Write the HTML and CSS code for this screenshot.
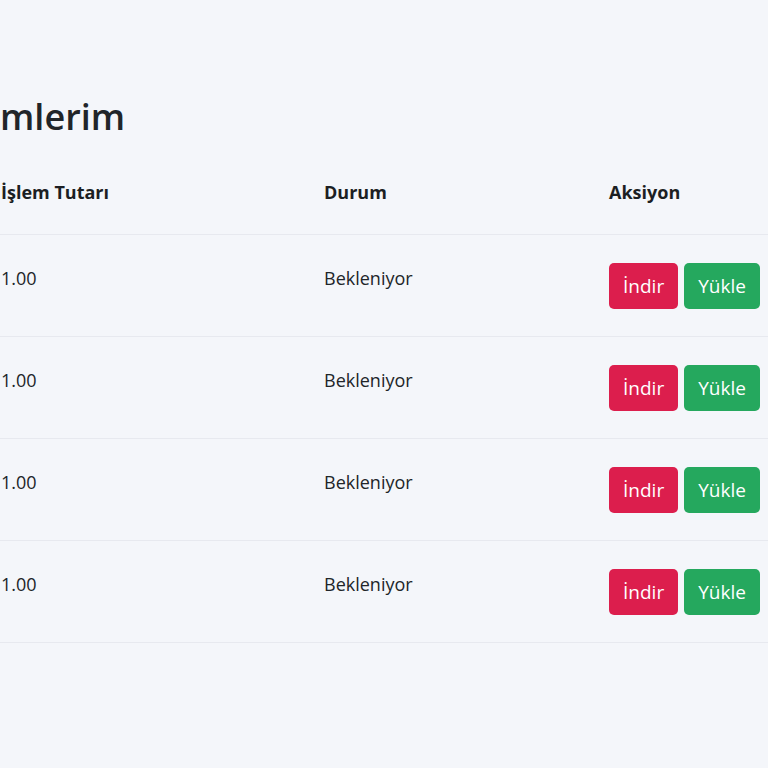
FILE: index.html
```html
<!DOCTYPE html>
<html>
<head>
	<meta charset="utf-8">
	<title>İşlemlerim</title>
	<link rel="stylesheet" href="styles.css">
</head>
<body>
	<div class="main">
		<h2 class="page-title">mlerim</h2>

		<div class="table">
			<div class="row head">
				<div class="cell">İşlem Tutarı</div>
				<div class="cell">Durum</div>
				<div class="cell">Aksiyon</div>
			</div>
			<div class="row">
				<div class="cell">1.00</div>
				<div class="cell">Bekleniyor</div>
				<div class="cell actions">
					<button class="btn btn-red">İndir</button>
					<button class="btn btn-green">Yükle</button>
				</div>
			</div>
			<div class="row">
				<div class="cell">1.00</div>
				<div class="cell">Bekleniyor</div>
				<div class="cell actions">
					<button class="btn btn-red">İndir</button>
					<button class="btn btn-green">Yükle</button>
				</div>
			</div>
			<div class="row">
				<div class="cell">1.00</div>
				<div class="cell">Bekleniyor</div>
				<div class="cell actions">
					<button class="btn btn-red">İndir</button>
					<button class="btn btn-green">Yükle</button>
				</div>
			</div>
			<div class="row">
				<div class="cell">1.00</div>
				<div class="cell">Bekleniyor</div>
				<div class="cell actions">
					<button class="btn btn-red">İndir</button>
					<button class="btn btn-green">Yükle</button>
				</div>
			</div>
		</div>
	</div>
</body>
</html>
```

FILE: styles.css
```css
* {
	margin: 0;
	padding: 0;
	box-sizing: border-box;
}
html, body {
	height: 100%;
}
body {
	background: #f4f6fa;
	color: #212529;
	font-family: "Open Sans", "Noto Sans", sans-serif;
	font-size: 18px;
	overflow: hidden;
}
.main {
	padding-top: 93px;
}
.page-title {
	font-size: 36px;
	font-weight: 600;
	line-height: 48px;
	margin-bottom: 8px;
}

.table {
	width: 800px;
}
.row {
	display: grid;
	grid-template-columns: 323px 285px 1fr;
	border-bottom: 1px solid #e7e9ef;
}
.cell {
	padding: 28px 0 27px 1px;
	line-height: 30px;
}
.head .cell {
	font-weight: 700;
	color: #1c1f23;
}
.actions {
	display: flex;
	gap: 6px;
}
.btn {
	height: 46px;
	padding: 0 14px;
	border: 0;
	border-radius: 5px;
	color: #fff;
	font-family: inherit;
	font-size: 19px;
	cursor: pointer;
}
.btn-red {
	background: #dc1e4d;
}
.btn-green {
	background: #25a85e;
}
```
